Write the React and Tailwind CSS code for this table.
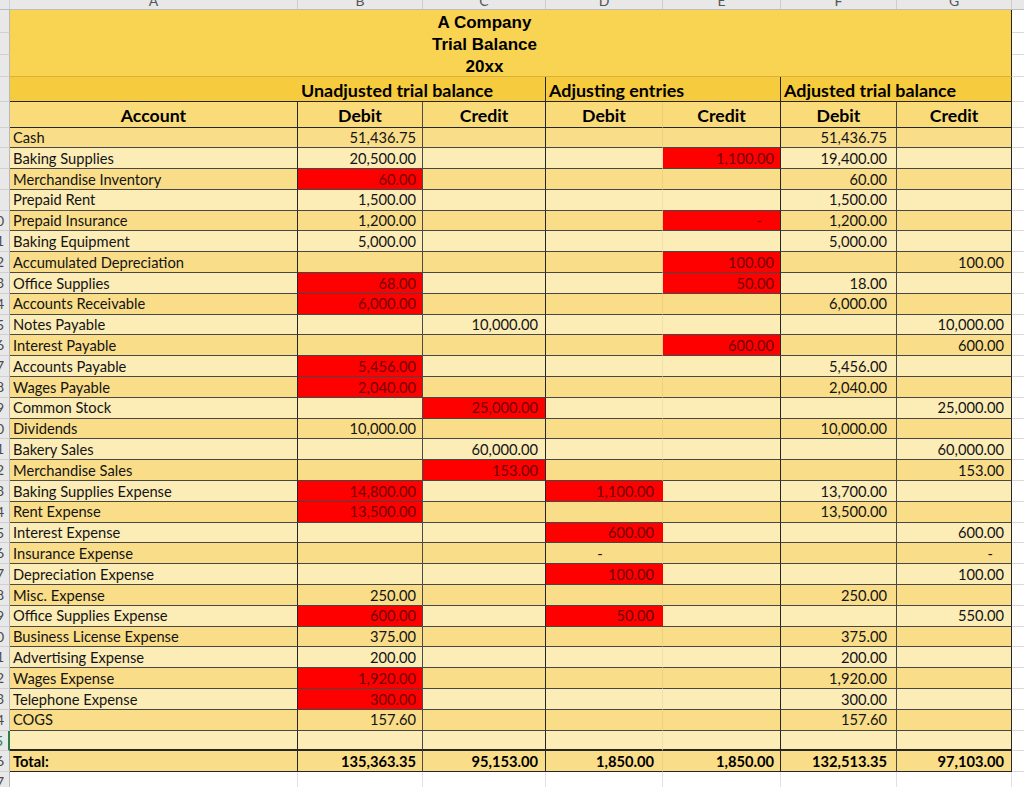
import React from "react";

const COLS = [
  { id: "B", w: "w-[125px]", r: "border-r-[#4a4a4a]", pr: "pr-[6px]" },
  { id: "C", w: "w-[123px]", r: "border-r-[#262626]", pr: "pr-[7px]" },
  { id: "D", w: "w-[117px]", r: "border-r-black/5", pr: "pr-[8px]" },
  { id: "E", w: "w-[118px]", r: "border-r-[#262626]", pr: "pr-[6px]" },
  { id: "F", w: "w-[116px]", r: "border-r-[#4a4a4a]", pr: "pr-[9px]" },
  { id: "G", w: "w-[115px]", r: "border-r-[#262626]", pr: "pr-[7px]" },
];

// [account, B, C, D, E, F, G, red columns]
const ROWS = [
  ["Cash", "51,436.75", "", "", "", "51,436.75", "", ""],
  ["Baking Supplies", "20,500.00", "", "", "1,100.00", "19,400.00", "", "E"],
  ["Merchandise Inventory", "60.00", "", "", "", "60.00", "", "B"],
  ["Prepaid Rent", "1,500.00", "", "", "", "1,500.00", "", ""],
  ["Prepaid Insurance", "1,200.00", "", "", "-", "1,200.00", "", "E"],
  ["Baking Equipment", "5,000.00", "", "", "", "5,000.00", "", ""],
  ["Accumulated Depreciation", "", "", "", "100.00", "", "100.00", "E"],
  ["Office Supplies", "68.00", "", "", "50.00", "18.00", "", "BE"],
  ["Accounts Receivable", "6,000.00", "", "", "", "6,000.00", "", "B"],
  ["Notes Payable", "", "10,000.00", "", "", "", "10,000.00", ""],
  ["Interest Payable", "", "", "", "600.00", "", "600.00", "E"],
  ["Accounts Payable", "5,456.00", "", "", "", "5,456.00", "", "B"],
  ["Wages Payable", "2,040.00", "", "", "", "2,040.00", "", "B"],
  ["Common Stock", "", "25,000.00", "", "", "", "25,000.00", "C"],
  ["Dividends", "10,000.00", "", "", "", "10,000.00", "", ""],
  ["Bakery Sales", "", "60,000.00", "", "", "", "60,000.00", ""],
  ["Merchandise Sales", "", "153.00", "", "", "", "153.00", "C"],
  ["Baking Supplies Expense", "14,800.00", "", "1,100.00", "", "13,700.00", "", "BD"],
  ["Rent Expense", "13,500.00", "", "", "", "13,500.00", "", "B"],
  ["Interest Expense", "", "", "600.00", "", "", "600.00", "D"],
  ["Insurance Expense", "", "", "-", "", "", "-", ""],
  ["Depreciation Expense", "", "", "100.00", "", "", "100.00", "D"],
  ["Misc. Expense", "250.00", "", "", "", "250.00", "", ""],
  ["Office Supplies Expense", "600.00", "", "50.00", "", "", "550.00", "BD"],
  ["Business License Expense", "375.00", "", "", "", "375.00", "", ""],
  ["Advertising Expense", "200.00", "", "", "", "200.00", "", ""],
  ["Wages Expense", "1,920.00", "", "", "", "1,920.00", "", "B"],
  ["Telephone Expense", "300.00", "", "", "", "300.00", "", "B"],
  ["COGS", "157.60", "", "", "", "157.60", "", ""],
];

function RowNum({ n, active }) {
  return (
    <div
      className={`flex h-full w-[10px] shrink-0 items-center justify-end overflow-hidden border-b border-r border-b-[#d0d0d0] bg-[#e8e8e8] text-[14px] font-normal ${
        active ? "border-r-2 border-r-[#2e7d4f] text-[#2e7d4f]" : "border-r-[#b8b8b8] text-[#4a4a4a]"
      }`}
    >
      <div className="w-[26px] shrink-0 text-center">{n}</div>
    </div>
  );
}

function Blank() {
  return <div className="h-full flex-1 border-b border-b-[#dadada] bg-white" />;
}

function DataRow({ n, row, dark }) {
  const [name, ...rest] = row;
  const red = rest[6];
  return (
    <div className={`flex h-[20.8px] ${dark ? "bg-[#f9dd89]" : "bg-[#fcecb6]"}`}>
      <RowNum n={n} />
      <div className="flex h-full w-[288px] shrink-0 items-center border-b border-r border-b-[#474747] border-r-[#262626] pl-[3px]">
        {name}
      </div>
      {COLS.map((c, i) => {
        const v = rest[i];
        const isRed = red.includes(c.id);
        const dash = v === "-";
        return (
          <div
            key={c.id}
            className={`flex h-full shrink-0 items-center border-b border-r border-b-[#474747] ${c.w} ${c.r} ${
              dash && c.id === "D" ? "justify-center" : "justify-end"
            } ${dash && c.id !== "D" ? "pr-[18px]" : c.pr} ${isRed ? "bg-[#ff0000] text-[#700000]" : ""}`}
          >
            {v}
          </div>
        );
      })}
      <Blank />
    </div>
  );
}

export default function App() {
  const letters = ["A", ...COLS.map((c) => c.id)];
  const widths = ["w-[288px]", ...COLS.map((c) => c.w)];
  return (
    <div className="h-[787px] w-[1024px] overflow-hidden bg-white font-['Lato',sans-serif] text-[14.7px] leading-none text-[#141414]">
      {/* column letters */}
      <div className="flex h-[10px] overflow-hidden border-b border-b-[#bdbdbd] bg-[#e8e8e8] text-[14px] text-[#555]">
        <div className="h-full w-[10px] shrink-0 border-r border-r-[#cfcfcf]" />
        {letters.map((l, i) => (
          <div key={l} className={`h-full shrink-0 overflow-hidden border-r border-r-[#cdcdcd] text-center ${widths[i]}`}>
            <div className="-mt-[6px] leading-[14px]">{l}</div>
          </div>
        ))}
        <div className="flex-1" />
      </div>

      {/* title block, rows 1-3 */}
      <div className="flex h-[67px]">
        <div className="flex w-[10px] shrink-0 flex-col">
          <div className="h-[23px]"><RowNum n={1} /></div>
          <div className="h-[22px]"><RowNum n={2} /></div>
          <div className="h-[22px]"><RowNum n={3} /></div>
        </div>
        <div className="flex w-[1002px] shrink-0 border-r border-b border-r-[#262626] border-b-[#d9b23a] bg-[#f8d452] font-['Liberation_Sans',sans-serif] text-[17px] font-bold leading-[22px] text-black">
          <div className="w-[413px] shrink-0" />
          <div className="flex w-[123px] shrink-0 flex-col items-center whitespace-nowrap pt-[2px]">
            <div>A Company</div>
            <div>Trial Balance</div>
            <div>20xx</div>
          </div>
        </div>
        <div className="flex flex-1 flex-col">
          <div className="h-[23px]"><Blank /></div>
          <div className="h-[22px]"><Blank /></div>
          <div className="h-[22px]"><Blank /></div>
        </div>
      </div>

      {/* row 4 section headings */}
      <div className="flex h-[25px] bg-[#f6cb3d] text-[17.9px] font-bold text-black">
        <RowNum n={4} />
        <div className="h-full w-[288px] shrink-0 border-b border-b-[#262626]" />
        <div className="flex h-full w-[248px] shrink-0 items-center whitespace-nowrap border-r border-b border-r-[#262626] border-b-[#262626] pl-[3px] pt-[3px]">
          Unadjusted trial balance
        </div>
        <div className="flex h-full w-[235px] shrink-0 items-center whitespace-nowrap border-r border-b border-r-[#262626] border-b-[#262626] pl-[3px] pt-[3px]">
          Adjusting entries
        </div>
        <div className="flex h-full w-[231px] shrink-0 items-center whitespace-nowrap border-r border-b border-r-[#262626] border-b-[#262626] pl-[3px] pt-[3px]">
          Adjusted trial balance
        </div>
        <Blank />
      </div>

      {/* row 5 column headings */}
      <div className="flex h-[25.5px] bg-[#f9db7a] text-[17.7px] font-bold text-black">
        <RowNum n={5} />
        <div className="flex h-full w-[288px] shrink-0 items-center justify-center border-r border-b border-r-[#262626] border-b-[#262626] pt-[3px]">
          Account
        </div>
        {COLS.map((c, i) => (
          <div
            key={c.id}
            className={`flex h-full shrink-0 items-center justify-center border-r border-b border-b-[#262626] pt-[3px] ${c.w} ${c.r}`}
          >
            {i % 2 === 0 ? "Debit" : "Credit"}
          </div>
        ))}
        <Blank />
      </div>

      {ROWS.map((row, i) => (
        <DataRow key={row[0]} n={i + 6} row={row} dark={i % 2 === 0} />
      ))}

      {/* empty row 35 */}
      <div className="flex h-[20.8px] bg-[#fcecb6]">
        <RowNum n={35} active />
        <div className="h-full w-[288px] shrink-0 border-r border-b-2 border-r-[#262626] border-b-[#262626]" />
        {COLS.map((c) => (
          <div key={c.id} className={`h-full shrink-0 border-r border-b-2 border-b-[#262626] ${c.w} ${c.r}`} />
        ))}
        <Blank />
      </div>

      {/* totals row 36 */}
      <div className="flex h-[20.8px] bg-[#f9dd89] font-bold text-black">
        <RowNum n={36} />
        <div className="flex h-full w-[288px] shrink-0 items-center border-r border-b border-r-[#262626] border-b-[#262626] pl-[3px]">
          Total:
        </div>
        {["135,363.35", "95,153.00", "1,850.00", "1,850.00", "132,513.35", "97,103.00"].map((v, i) => (
          <div
            key={v + i}
            className={`flex h-full shrink-0 items-center justify-end border-r border-b border-b-[#262626] ${COLS[i].w} ${COLS[i].r} ${COLS[i].pr}`}
          >
            {v}
          </div>
        ))}
        <Blank />
      </div>

      {/* row 37 */}
      <div className="flex h-[20.8px] bg-white">
        <RowNum n={37} />
        <div className="h-full w-[288px] shrink-0 border-r border-r-[#e0e0e0]" />
        {COLS.map((c) => (
          <div key={c.id} className={`h-full shrink-0 border-r border-r-[#e0e0e0] ${c.w}`} />
        ))}
      </div>
    </div>
  );
}
